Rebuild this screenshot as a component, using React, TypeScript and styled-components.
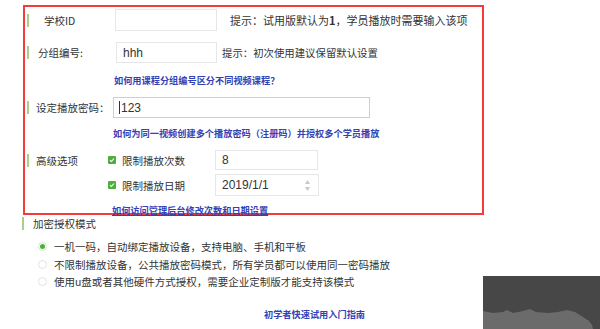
import React from "react";
import styled, { createGlobalStyle } from "styled-components";

const GlobalStyle = createGlobalStyle`
  html, body {
    margin: 0;
    padding: 0;
    background: #ffffff;
  }
  body {
    font-family: "Noto Sans CJK SC", "Liberation Sans", sans-serif;
    color: #333;
  }
`;

const Page = styled.div`
  width: 600px;
  height: 329px;
  padding-top: 5px;
  box-sizing: border-box;
  display: flex;
  flex-direction: column;
  overflow: hidden;
  background: #fff;
`;

const Frame = styled.div`
  margin-left: 23px;
  width: 461px;
  height: 210px;
  flex: none;
  box-sizing: border-box;
  border: 2px solid #f53a3a;
  padding-left: 2px;
  display: flex;
  flex-direction: column;
`;

const Row = styled.div<{ $top: number; $h: number }>`
  display: flex;
  align-items: center;
  margin-top: ${({ $top }) => $top}px;
  height: ${({ $h }) => $h}px;
  flex: none;
`;

const Marker = styled.span`
  width: 2px;
  height: 13px;
  background: #a9d08a;
  flex: none;
`;

const Label = styled.span<{ $indent: number; $w: number }>`
  box-sizing: border-box;
  width: ${({ $w }) => $w}px;
  padding-left: ${({ $indent }) => $indent}px;
  font-size: 10.5px;
  color: #333;
  white-space: nowrap;
  flex: none;
`;

const Input = styled.div<{ $w: number; $h: number; $green?: boolean }>`
  box-sizing: border-box;
  width: ${({ $w }) => $w}px;
  height: ${({ $h }) => $h}px;
  border: 1px solid ${({ $green }) => ($green ? "#c9d9ae" : "#e6e6e6")};
  display: flex;
  align-items: center;
  padding-left: 6px;
  font-family: "Liberation Sans", "Noto Sans CJK SC", sans-serif;
  font-size: 12px;
  color: #333;
  flex: none;
  position: relative;
`;

const Caret = styled.span`
  width: 1px;
  height: 13px;
  background: #333;
  margin-left: -1px;
  margin-right: 1px;
`;

const Hint = styled.span<{ $gap: number; $size: number }>`
  margin-left: ${({ $gap }) => $gap}px;
  font-size: ${({ $size }) => $size}px;
  color: #333;
  white-space: nowrap;
`;

const HelpLink = styled.a<{ $top: number; $left: number; $underline?: boolean }>`
  display: block;
  margin-top: ${({ $top }) => $top}px;
  padding-left: ${({ $left }) => $left}px;
  height: 12px;
  line-height: 12px;
  font-size: 9.2px;
  font-weight: 700;
  color: #3441b4;
  white-space: nowrap;
  text-decoration: ${({ $underline }) => ($underline ? "underline" : "none")};
  flex: none;
`;

const Advanced = styled.div`
  display: flex;
  align-items: flex-start;
  margin-top: 11px;
  flex: none;
`;

const AdvancedHead = styled.div`
  display: flex;
  align-items: center;
  height: 20px;
`;

const Options = styled.div`
  display: flex;
  flex-direction: column;
  gap: 4px;
`;

const OptionRow = styled.div<{ $h: number }>`
  display: flex;
  align-items: center;
  height: ${({ $h }) => $h}px;
`;

const Check = styled.span`
  width: 8px;
  height: 8px;
  background: #4fae3c;
  border-radius: 1px;
  display: flex;
  align-items: center;
  justify-content: center;
  flex: none;
`;

const OptionText = styled.span`
  margin-left: 6px;
  width: 93px;
  font-size: 10.5px;
  color: #333;
  white-space: nowrap;
`;

const Spinner = styled.span`
  position: absolute;
  right: 8px;
  top: 5px;
  display: flex;
  flex-direction: column;
  gap: 3px;
`;

const ModeHead = styled.div`
  display: flex;
  align-items: center;
  margin-top: 2px;
  margin-left: 22px;
  height: 13px;
  flex: none;
`;

const ModeTitle = styled.span`
  margin-left: 9px;
  font-size: 10.5px;
  color: #333;
`;

const Bottom = styled.div`
  flex: 1;
  display: flex;
  align-items: flex-start;
`;

const BottomLeft = styled.div`
  flex: 1;
  display: flex;
  flex-direction: column;
`;

const RadioList = styled.div`
  margin-top: 8px;
  padding-left: 38px;
  display: flex;
  flex-direction: column;
`;

const RadioRow = styled.div`
  display: flex;
  align-items: center;
  height: 17.5px;
`;

const Radio = styled.span<{ $on?: boolean }>`
  box-sizing: border-box;
  width: 9px;
  height: 9px;
  border-radius: 50%;
  border: 1px solid ${({ $on }) => ($on ? "#cfe6c4" : "#e2e2e2")};
  display: flex;
  align-items: center;
  justify-content: center;
  flex: none;
  &::after {
    content: "";
    width: 5px;
    height: 5px;
    border-radius: 50%;
    background: ${({ $on }) => ($on ? "#4fae3c" : "transparent")};
  }
`;

const RadioText = styled.span`
  margin-left: 7px;
  font-size: 10.5px;
  color: #333;
  white-space: nowrap;
`;

const Photo = styled.svg`
  align-self: flex-end;
  flex: none;
  display: block;
`;

const options = [
  { text: "一机一码，自动绑定播放设备，支持电脑、手机和平板", on: true },
  { text: "不限制播放设备，公共播放密码模式，所有学员都可以使用同一密码播放", on: false },
  { text: "使用u盘或者其他硬件方式授权，需要企业定制版才能支持该模式", on: false },
];

const CheckMark = () => (
  <svg width="6" height="6" viewBox="0 0 6 6">
    <path d="M1 3.2 L2.4 4.5 L5 1.5" stroke="#fff" strokeWidth="1.1" fill="none" />
  </svg>
);

export default function App() {
  return (
    <>
      <GlobalStyle />
      <Page>
        <Frame>
          <Row $top={2} $h={22}>
            <Marker />
            <Label $indent={15} $w={86}>学校ID</Label>
            <Input $w={102} $h={22} />
            <Hint $gap={13} $size={11}>提示：试用版默认为<b>1</b>，学员播放时需要输入该项</Hint>
          </Row>
          <Row $top={11} $h={21}>
            <Marker />
            <Label $indent={9} $w={87}>分组编号:</Label>
            <Input $w={101} $h={21}>hhh</Input>
            <Hint $gap={5} $size={10.4}>提示：初次使用建议保留默认设置</Hint>
          </Row>
          <HelpLink $top={11} $left={87}>如何用课程分组编号区分不同视频课程？</HelpLink>
          <Row $top={11} $h={21}>
            <Marker />
            <Label $indent={7} $w={84}>设定播放密码：</Label>
            <Input $w={257} $h={21} $green>
              <Caret />
              123
            </Input>
          </Row>
          <HelpLink $top={9} $left={86}>如何为同一视频创建多个播放密码（注册码）并授权多个学员播放</HelpLink>
          <Advanced>
            <AdvancedHead>
              <Marker />
              <Label $indent={7} $w={79}>高级选项</Label>
            </AdvancedHead>
            <Options>
              <OptionRow $h={20}>
                <Check><CheckMark /></Check>
                <OptionText>限制播放次数</OptionText>
                <Input $w={103} $h={20}>8</Input>
              </OptionRow>
              <OptionRow $h={22}>
                <Check><CheckMark /></Check>
                <OptionText>限制播放日期</OptionText>
                <Input $w={104} $h={22}>
                  2019/1/1
                  <Spinner>
                    <svg width="5" height="4" viewBox="0 0 5 4"><path d="M0 4 L2.5 0 L5 4Z" fill="#c8c8c8" /></svg>
                    <svg width="5" height="4" viewBox="0 0 5 4"><path d="M0 0 L2.5 4 L5 0Z" fill="#c8c8c8" /></svg>
                  </Spinner>
                </Input>
              </OptionRow>
            </Options>
          </Advanced>
          <HelpLink $top={8} $left={85} $underline>如何访问管理后台修改次数和日期设置</HelpLink>
        </Frame>
        <ModeHead>
          <Marker />
          <ModeTitle>加密授权模式</ModeTitle>
        </ModeHead>
        <Bottom>
          <BottomLeft>
            <RadioList>
              {options.map((o) => (
                <RadioRow key={o.text}>
                  <Radio $on={o.on} />
                  <RadioText>{o.text}</RadioText>
                </RadioRow>
              ))}
            </RadioList>
            <HelpLink $top={17} $left={264}>初学者快速试用入门指南</HelpLink>
          </BottomLeft>
          <Photo width="117" height="53" viewBox="0 0 117 53">
            <rect width="117" height="53" fill="#474747" />
            <path
              d="M0 35 L10 37 L20 36 L24 34 L30 37 L40 35 L47 33 L53 36 L65 37 L75 36 L84 34 L92 36 L100 41 L106 45 L109 49 L110 53 L0 53Z"
              fill="#6b6b6b"
            />
          </Photo>
        </Bottom>
      </Page>
    </>
  );
}
